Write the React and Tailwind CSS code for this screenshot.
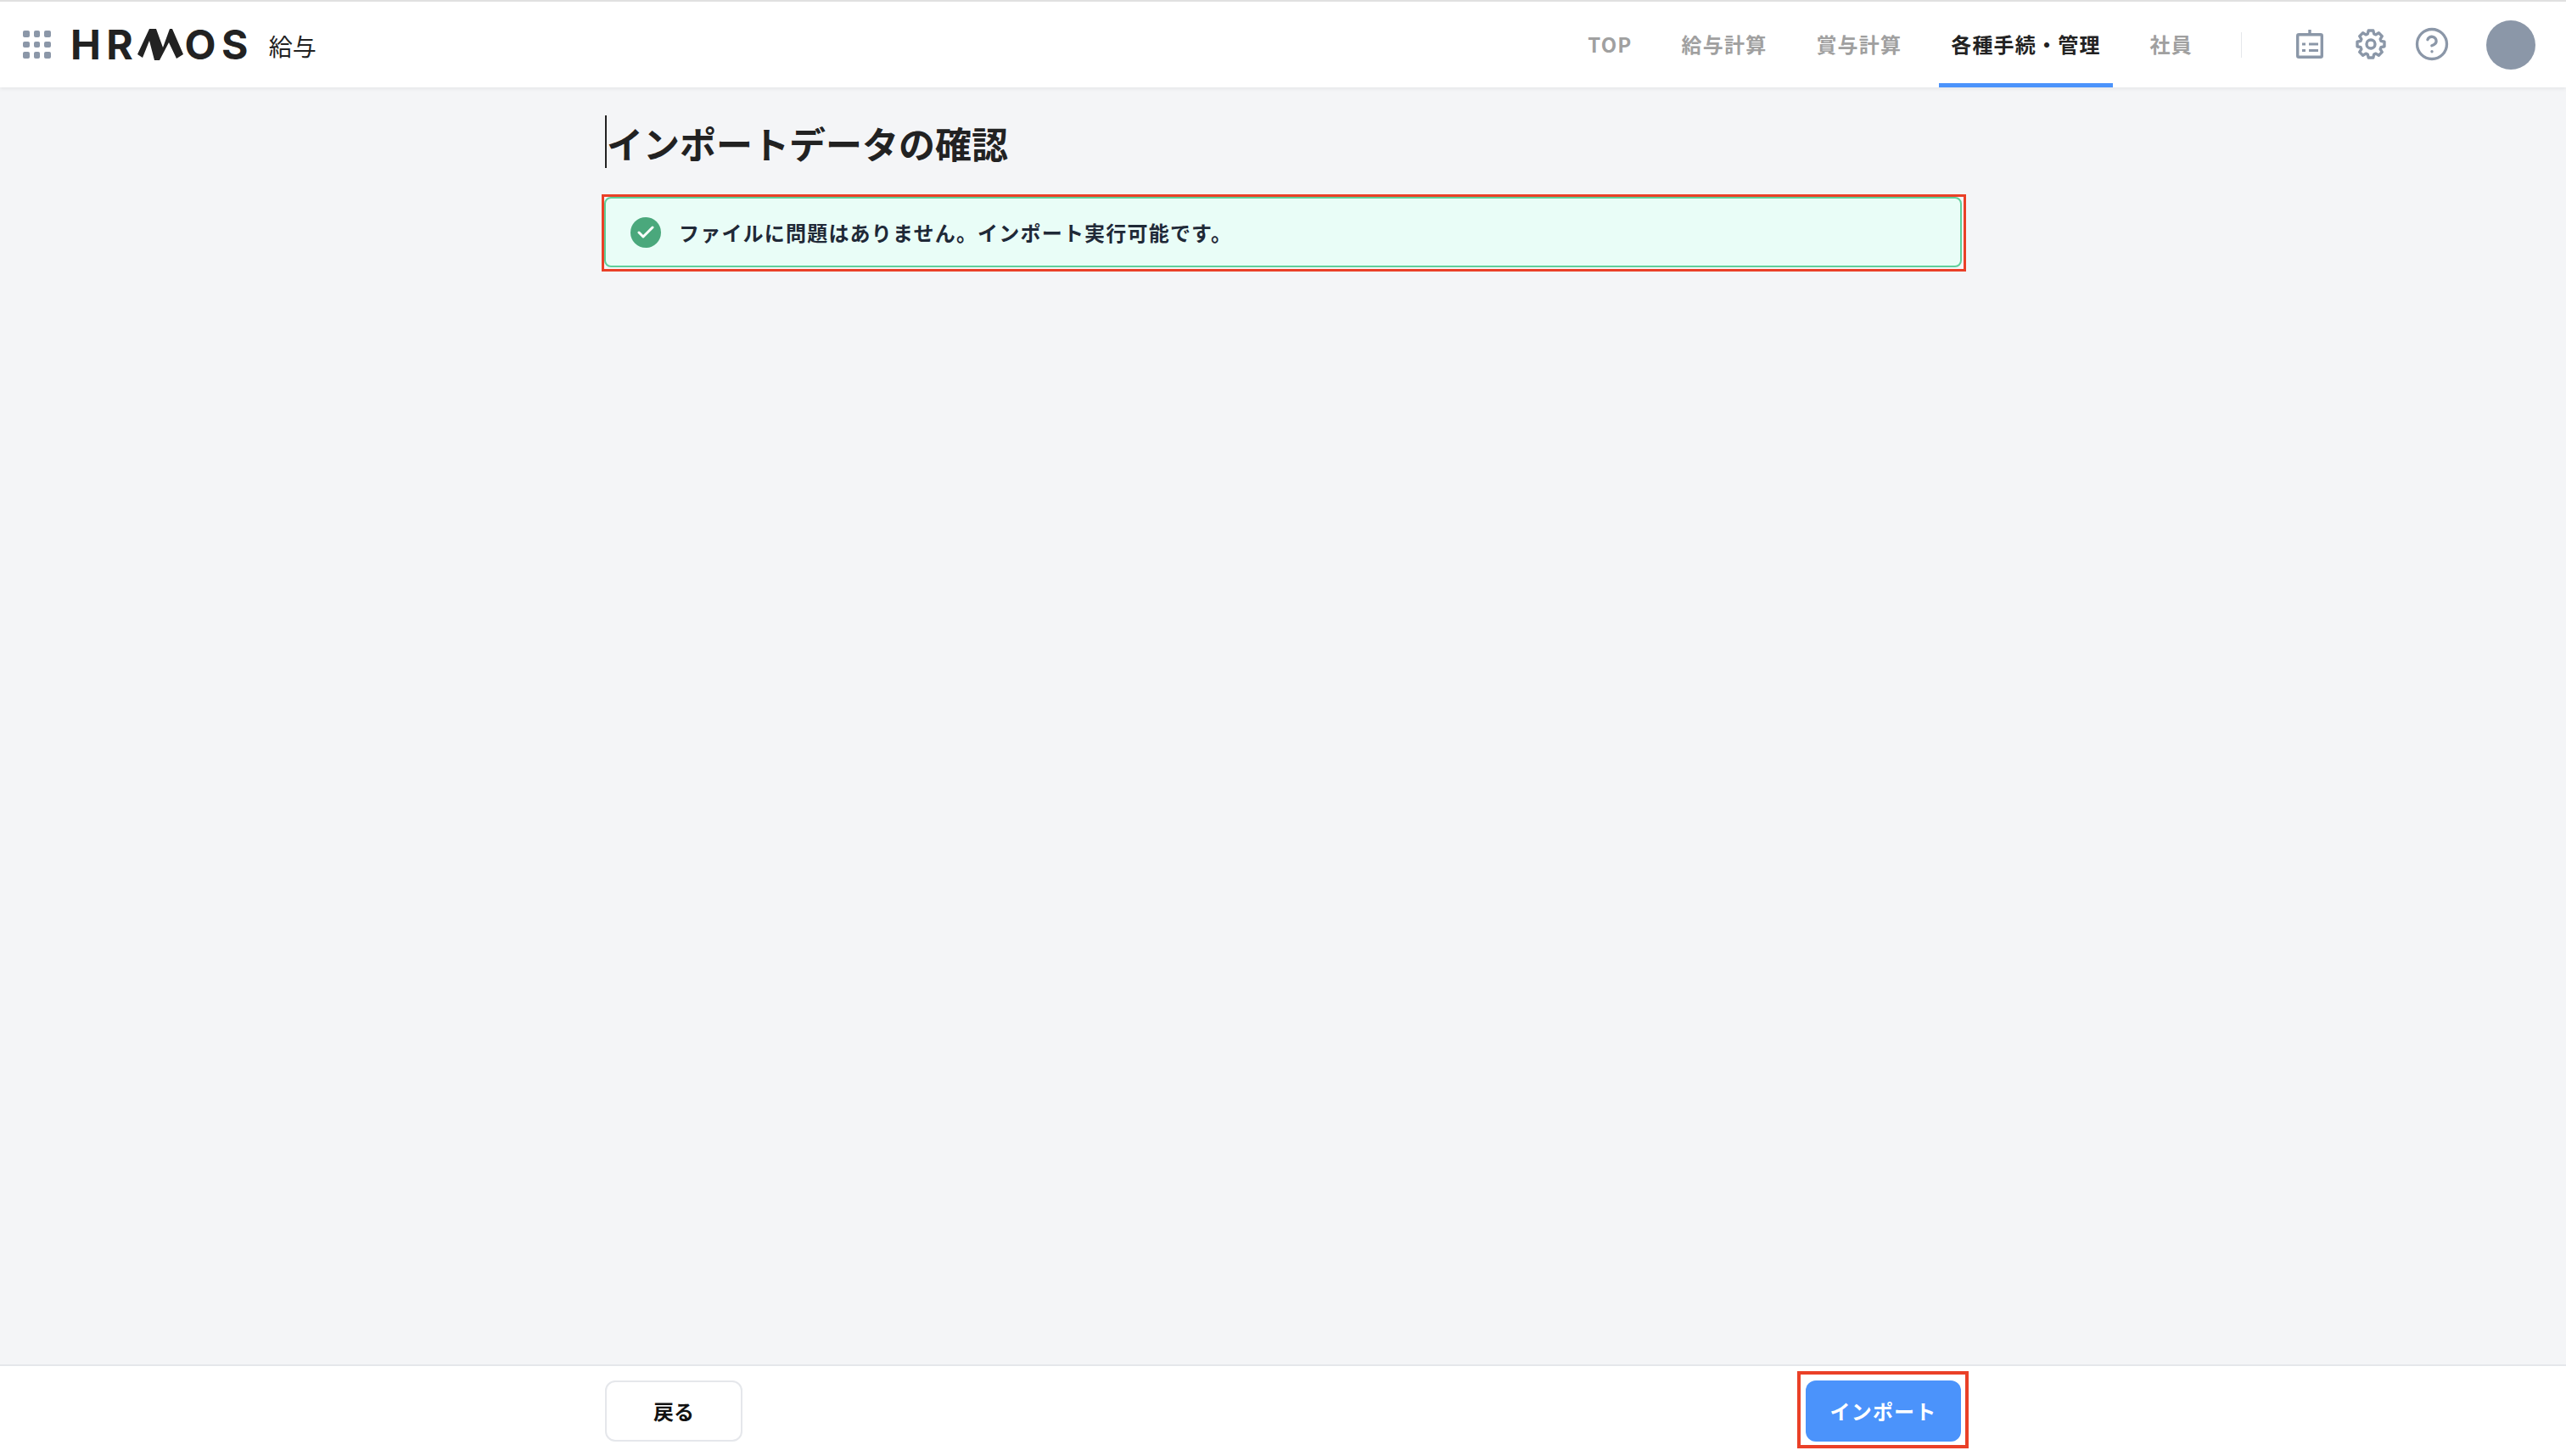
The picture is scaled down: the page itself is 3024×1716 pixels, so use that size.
import React from 'react';
import { CircleHelp, Check } from 'lucide-react';

const jpFont = 'font-["Noto_Sans_CJK_JP","Noto_Sans",sans-serif]';

const tabs = [
  { label: 'TOP' },
  { label: '給与計算' },
  { label: '賞与計算' },
  { label: '各種手続・管理', active: true },
  { label: '社員' },
];

const GridIcon = () => (
  <div className="grid grid-cols-3 gap-[5px] w-[33px]">
    {Array.from({ length: 9 }).map((_, i) => (
      <span key={i} className="w-[7.6px] h-[7.6px] rounded-[2px] bg-[#8b97a8]" />
    ))}
  </div>
);

const Logo = () => (
  <div className="flex items-center text-[#222222] font-['Inter',sans-serif] font-bold text-[48px] leading-none tracking-[6.5px]">
    <span>HR</span>
    <svg width="54" height="38" viewBox="0 0 54 38" className="-ml-[1px] mr-[1px]" fill="#222222">
      <path d="M0 30 L14 0 L22 0 L30 22 L38 0 L41 0 L54 30 L46 35 L37 16 L26 37 L20 37 L14 14 L6 34 Z" />
    </svg>
    <span>OS</span>
  </div>
);

const ReportIcon = () => (
  <svg width="32" height="34" viewBox="0 0 32 34" fill="none" stroke="#8b97a8" strokeWidth="3.4">
    <path d="M16 0 V6" />
    <rect x="1.7" y="5.7" width="28.6" height="26.6" rx="1.5" />
    <path d="M15 17 H26 M15 24.5 H26" strokeWidth="3" />
    <path d="M7 17 H11 M7 24.5 H11" strokeWidth="3" />
  </svg>
);

const gearPoints = () => {
  // 8 flat-topped teeth
  const pts = [];
  for (let i = 0; i < 8; i++) {
    const a = (i * Math.PI) / 4;
    [[-0.3, 12.6], [-0.17, 16.2], [0.17, 16.2], [0.3, 12.6]].forEach(([d, r]) => {
      pts.push(`${(18 + r * Math.sin(a + d)).toFixed(2)},${(18 - r * Math.cos(a + d)).toFixed(2)}`);
    });
  }
  return pts.join(' ');
};

const GearIcon = () => (
  <svg width="36" height="36" viewBox="0 0 36 36" fill="none" stroke="#8b97a8" strokeWidth="3.4" strokeLinejoin="round">
    <polygon points={gearPoints()} />
    <circle cx="18" cy="18" r="5" />
  </svg>
);

const App = () => {
  return (
    <div className={`h-[1716px] flex flex-col bg-[#f4f5f7] ${jpFont}`}>
      <header className="h-[103px] shrink-0 flex items-center bg-white border-t-2 border-[#e0e0e0] shadow-[0_2px_4px_rgba(0,0,0,0.06)] pl-[27px] pr-[36px]">
        <GridIcon />
        <div className="ml-[23px]">
          <Logo />
        </div>
        <span className="ml-[18px] mt-[2px] text-[28px] text-[#222222] leading-none">給与</span>

        <nav className="ml-auto h-full flex gap-[30px]">
          {tabs.map((tab) => (
            <div
              key={tab.label}
              className={
                tab.active
                  ? 'h-full flex items-center px-[14px] pt-[4px] border-b-[5px] border-[#4b93fb] text-[24px] font-bold tracking-[1.2px] text-[#222222]'
                  : 'h-full flex items-center px-[14px] pt-[4px] border-b-[5px] border-transparent text-[24px] font-bold tracking-[1.2px] text-[#a0a0a0]'
              }
            >
              {tab.label}
            </div>
          ))}
        </nav>

        <div className="ml-[43px] w-px h-[30px] bg-[#e5e7eb]" />

        <div className="ml-[64px] -mt-[2px] flex items-center gap-[36px]">
          <ReportIcon />
          <span className="ml-[2px]">
            <GearIcon />
          </span>
          <CircleHelp size={42} strokeWidth={1.9} className="text-[#8b97a8] -mx-[3px]" />
        </div>
        <div className="ml-[46px] w-[58px] h-[58px] rounded-full bg-[#8b97a8]" />
      </header>

      <main className="flex-1 w-[1600px] mx-auto">
        <div className="mt-[33px] h-[62px] flex items-center">
          <span className="ml-[1px] w-[2px] h-[62px] bg-[#222222]" />
          <h1 className="text-[43px] font-bold text-[#222222] leading-none mt-[2px]">インポートデータの確認</h1>
        </div>

        <div className="relative mt-[34px]">
          <div className="h-[83px] flex items-center pl-[29px] bg-[#e9fdf7] border-2 border-[#5fcf9b] rounded-[8px]">
            <span className="w-[36px] h-[36px] rounded-full bg-[#4aa87c] flex items-center justify-center">
              <Check size={24} strokeWidth={3} className="text-white" />
            </span>
            <p className="ml-[21px] text-[24px] font-bold tracking-[1.2px] text-[#1f2937]">
              ファイルに問題はありません。インポート実行可能です。
            </p>
          </div>
          <div className="absolute -left-[3px] -top-[3px] -right-[5px] -bottom-[5px] border-[3px] border-[#ea4027] pointer-events-none" />
        </div>
      </main>

      <footer className="h-[108px] shrink-0 bg-white border-t-2 border-[#e5e7eb]">
        <div className="w-[1600px] mx-auto flex justify-between pt-[17px]">
          <button className="w-[162px] h-[72px] ml-[1px] bg-white border-2 border-[#e5e7eb] rounded-[12px] text-[24px] font-bold text-[#111111]">
            戻る
          </button>
          <div className="relative mr-[1px]">
            <button className="block w-[183px] h-[72px] bg-[#4b93fb] rounded-[12px] text-[24px] font-bold tracking-[1.2px] text-white">
              インポート
            </button>
            <div className="absolute -left-[10px] -top-[11px] -right-[9px] -bottom-[8px] border-[4px] border-[#ea4027] pointer-events-none" />
          </div>
        </div>
      </footer>
    </div>
  );
};

export default App;
